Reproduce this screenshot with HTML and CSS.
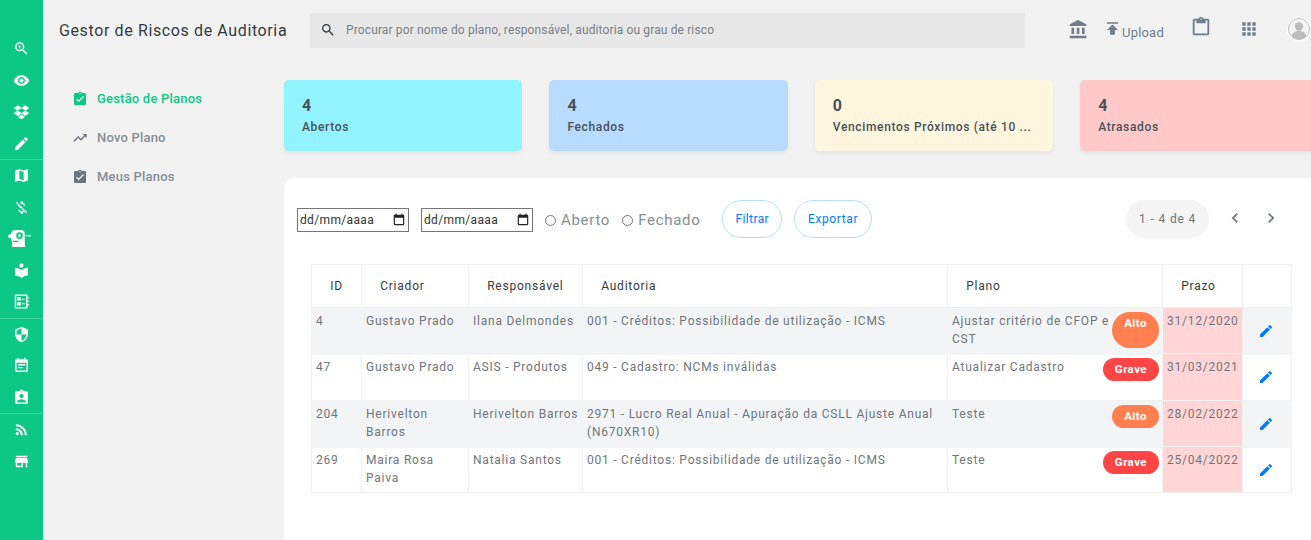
FILE: index.html
```html
<!DOCTYPE html>
<html lang="pt-br">
<head>
    <meta charset="UTF-8">
    <meta name="viewport" content="width=device-width, initial-scale=1.0">
    <title>Gestor de Riscos de Auditoria</title>
    <link rel="stylesheet" href="styles.css">
</head>
<body>

<svg class="sprite" width="0" height="0">
    <symbol id="i-zoom" viewBox="0 0 24 24"><path d="M15.5 14h-.79l-.28-.27C15.41 12.59 16 11.11 16 9.5 16 5.91 13.09 3 9.5 3S3 5.91 3 9.5 5.91 16 9.5 16c1.61 0 3.09-.59 4.23-1.57l.27.28v.79l5 4.99L20.49 19l-4.99-5zm-6 0C7.01 14 5 11.99 5 9.5S7.01 5 9.5 5 14 7.01 14 9.5 11.99 14 9.5 14z"/><path d="M12 10h-2v2H9v-2H7V9h2V7h1v2h2v1z"/></symbol>
    <symbol id="i-eye" viewBox="0 0 24 24"><path d="M12 4.5C7 4.5 2.73 7.61 1 12c1.73 4.39 6 7.5 11 7.5s9.27-3.11 11-7.5c-1.73-4.39-6-7.5-11-7.5zM12 17c-2.76 0-5-2.24-5-5s2.24-5 5-5 5 2.24 5 5-2.24 5-5 5zm0-8c-1.66 0-3 1.34-3 3s1.34 3 3 3 3-1.34 3-3-1.34-3-3-3z"/></symbol>
    <symbol id="i-dropbox" viewBox="0 0 24 24"><path d="M7 3L1 7l5 3.6L1 14.5l6 4 5-3.6 5 3.6 6-4-5-3.9L23 7l-6-4-5 3.8zM12 7.4l5.6 3.2L12 14l-5.6-3.4zM7 19.8l5-3.4 5 3.4-5 3.2z"/></symbol>
    <symbol id="i-edit" viewBox="0 0 24 24"><path d="M3 17.25V21h3.75L17.81 9.94l-3.75-3.75L3 17.25zM20.71 7.04c.39-.39.39-1.02 0-1.41l-2.34-2.34c-.39-.39-1.02-.39-1.41 0l-1.83 1.83 3.75 3.75 1.83-1.83z"/></symbol>
    <symbol id="i-map" viewBox="0 0 24 24"><path d="M20.5 3l-.16.03L15 5.1 9 3 3.36 4.9c-.21.07-.36.25-.36.48V20.5c0 .28.22.5.5.5l.16-.03L9 18.9l6 2.1 5.64-1.9c.21-.07.36-.25.36-.48V3.5c0-.28-.22-.5-.5-.5zM15 19l-6-2.11V5l6 2.11V19z"/></symbol>
    <symbol id="i-money" viewBox="0 0 24 24"><path d="M12.5 6.9c1.78 0 2.44.85 2.5 2.1h2.21c-.07-1.72-1.12-3.3-3.21-3.81V3h-3v2.16c-.53.12-1.03.3-1.48.54l1.47 1.47c.41-.17.91-.27 1.51-.27zM5.33 4.06L4.06 5.33 7.5 8.77c0 2.08 1.56 3.21 3.91 3.91l3.51 3.51c-.34.48-1.05.91-2.42.91-2.06 0-2.87-.92-2.98-2.1h-2.2c.12 2.19 1.76 3.42 3.68 3.83V21h3v-2.15c.96-.18 1.83-.55 2.46-1.12l2.22 2.22 1.27-1.27L5.33 4.06z"/></symbol>
    <symbol id="i-robot" viewBox="0 0 24 18"><path fill-rule="evenodd" d="M7 0h7c2 0 3.500 1.500 3.500 3.500V11l.5 7H4v-6.500C3.200 11 2.900 10 2.900 8.500H2a2 2 0 1 1 0-4h1C3.500 2 5 0 7 0zm5 2.500a3.500 3.500 0 1 0 0 7 3.500 3.500 0 0 0 0-7zm0 2a1.500 1.500 0 1 1 0 3 1.500 1.500 0 0 1 0-3zM5 11.500v1.300h6v-1.300z"/><path d="M17.500 5.700h4.500v.8h-4.500z"/><circle cx="22.700" cy="6.100" r="1.200"/></symbol>
    <symbol id="i-library" viewBox="0 0 24 24"><path d="M12 11.55C9.64 9.35 6.48 8 3 8v11c3.48 0 6.64 1.35 9 3.55 2.36-2.19 5.52-3.55 9-3.55V8c-3.48 0-6.64 1.35-9 3.55zM12 8c1.66 0 3-1.34 3-3s-1.34-3-3-3-3 1.34-3 3 1.34 3 3 3z"/></symbol>
    <symbol id="i-notebook" viewBox="0 0 24 24"><path fill-rule="evenodd" d="M4 2h15c1 0 1.500.7 1.500 1.500V6H23v1.500h-2.500V11H23v1.500h-2.500V16H23v1.500h-2.500v3c0 .8-.5 1.500-1.500 1.500H4c-1 0-1.500-.7-1.500-1.500v-17C2.500 2.700 3 2 4 2zm.5 2v16h14V4zM6 6h5v4.500H6zm6.500 2H17v1.500h-4.500zM6 13h5v4.500H6zm6.500 1.500H17V16h-4.500z"/></symbol>
    <symbol id="i-shield" viewBox="0 0 24 24"><path d="M12 1L3 5v6c0 5.550 3.840 10.740 9 12 5.160-1.260 9-6.450 9-12V5l-9-4zm0 10.990h7c-.53 4.120-3.280 7.790-7 8.940V12H5V6.300l7-3.110v8.800z"/></symbol>
    <symbol id="i-event" viewBox="0 0 24 24"><path d="M17 10H7v2h10v-2zm2-7h-1V1h-2v2H8V1H6v2H5c-1.110 0-1.990.9-1.990 2L3 19c0 1.100.89 2 2 2h14c1.100 0 2-.9 2-2V5c0-1.100-.9-2-2-2zm0 16H5V8h14v11zm-5-5H7v2h7v-2z"/></symbol>
    <symbol id="i-contact" viewBox="0 0 24 24"><path d="M19 3h-4.180C14.400 1.840 13.300 1 12 1c-1.300 0-2.400.84-2.820 2H5c-1.100 0-2 .9-2 2v14c0 1.100.9 2 2 2h14c1.100 0 2-.9 2-2V5c0-1.100-.9-2-2-2zm-7 0c.55 0 1 .45 1 1s-.45 1-1 1-1-.45-1-1 .45-1 1-1zm0 4c1.660 0 3 1.340 3 3s-1.340 3-3 3-3-1.340-3-3 1.340-3 3-3zm6 12H6v-1.400c0-2 4-3.100 6-3.100s6 1.100 6 3.100V19z"/></symbol>
    <symbol id="i-rss" viewBox="0 0 24 24"><circle cx="6.180" cy="17.820" r="2.180"/><path d="M4 4.440v2.830c7.030 0 12.730 5.700 12.730 12.730h2.830c0-8.590-6.970-15.560-15.560-15.560zm0 5.660v2.830c3.900 0 7.070 3.170 7.070 7.070h2.830c0-5.470-4.430-9.900-9.900-9.900z"/></symbol>
    <symbol id="i-store" viewBox="0 0 24 24"><path d="M20 4H4v2h16V4zm1 10v-2l-1-5H4l-1 5v2h1v6h10v-6h4v6h2v-6h1zm-9 4H6v-4h6v4z"/></symbol>
    <symbol id="i-done" viewBox="0 0 24 24"><path d="M19 3h-4.180C14.400 1.840 13.300 1 12 1c-1.300 0-2.400.84-2.820 2H5c-1.100 0-2 .9-2 2v14c0 1.100.9 2 2 2h14c1.100 0 2-.9 2-2V5c0-1.100-.9-2-2-2zm-7 0c.55 0 1 .45 1 1s-.45 1-1 1-1-.45-1-1 .45-1 1-1zm-2 14l-4-4 1.410-1.410L10 14.170l6.590-6.590L18 9l-8 8z"/></symbol>
    <symbol id="i-trend" viewBox="0 0 24 24"><path d="M16 6l2.290 2.290-4.880 4.880-4-4L2 16.590 3.410 18l6-6 4 4 6.300-6.290L22 12V6z"/></symbol>
    <symbol id="i-bank" viewBox="0 0 24 24"><path d="M4 10v7h3v-7H4zm6 0v7h3v-7h-3zM2 22h19v-3H2v3zm14-12v7h3v-7h-3zm-4.500-9L2 6v2h19V6l-9.500-5z"/></symbol>
    <symbol id="i-publish" viewBox="0 0 24 24"><path d="M5 4v2h14V4H5zm0 10h4v6h6v-6h4l-7-7-7 7z"/></symbol>
    <symbol id="i-clip" viewBox="0 0 24 24"><path d="M19 3h-4.180C14.400 1.840 13.300 1 12 1c-1.300 0-2.400.84-2.820 2H5c-1.100 0-2 .9-2 2v14c0 1.100.9 2 2 2h14c1.100 0 2-.9 2-2V5c0-1.100-.9-2-2-2zm-7-.25c.41 0 .75.34.75.75s-.34.75-.75.75-.75-.34-.75-.75.34-.75.75-.75zM19 19H5V5h2v3h10V5h2v14z"/></symbol>
    <symbol id="i-apps" viewBox="0 0 24 24"><path d="M4 8h4V4H4v4zm6 12h4v-4h-4v4zm-6 0h4v-4H4v4zm0-6h4v-4H4v4zm6 0h4v-4h-4v4zm6-10v4h4V4h-4zm-6 4h4V4h-4v4zm6 6h4v-4h-4v4zm0 6h4v-4h-4v4z"/></symbol>
    <symbol id="i-search" viewBox="0 0 24 24"><path d="M15.500 14h-.79l-.28-.27C15.410 12.590 16 11.110 16 9.500 16 5.910 13.090 3 9.500 3S3 5.910 3 9.500 5.910 16 9.500 16c1.610 0 3.090-.59 4.230-1.570l.27.28v.79l5 4.990L20.490 19l-4.990-5zm-6 0C7.010 14 5 11.990 5 9.500S7.010 5 9.500 5 14 7.010 14 9.500 11.990 14 9.500 14z"/></symbol>
    <symbol id="i-cal" viewBox="0 0 24 24"><path d="M19 3h-1V1h-2v2H8V1H6v2H5c-1.100 0-2 .9-2 2v14c0 1.100.9 2 2 2h14c1.100 0 2-.9 2-2V5c0-1.100-.9-2-2-2zm0 16H5V8h14v11z"/></symbol>
    <symbol id="i-left" viewBox="0 0 24 24"><path d="M15.410 7.410L14 6l-6 6 6 6 1.410-1.410L10.830 12z"/></symbol>
    <symbol id="i-right" viewBox="0 0 24 24"><path d="M10 6L8.590 7.410 13.170 12l-4.580 4.590L10 18l6-6z"/></symbol>
</svg>

<div class="app">
    <!-- Barra lateral -->
    <aside class="rail">
        <div class="rail-group">
            <span class="rail-item"><svg><use href="#i-zoom"/></svg></span>
            <span class="rail-item"><svg><use href="#i-eye"/></svg></span>
            <span class="rail-item"><svg><use href="#i-dropbox"/></svg></span>
            <span class="rail-item"><svg><use href="#i-edit"/></svg></span>
        </div>
        <div class="rail-group">
            <span class="rail-item"><svg><use href="#i-map"/></svg></span>
            <span class="rail-item"><svg><use href="#i-money"/></svg></span>
            <span class="rail-item"><svg class="robot"><use href="#i-robot"/></svg></span>
            <span class="rail-item"><svg><use href="#i-library"/></svg></span>
            <span class="rail-item"><svg><use href="#i-notebook"/></svg></span>
        </div>
        <div class="rail-group">
            <span class="rail-item"><svg><use href="#i-shield"/></svg></span>
            <span class="rail-item"><svg><use href="#i-event"/></svg></span>
            <span class="rail-item"><svg><use href="#i-contact"/></svg></span>
        </div>
        <div class="rail-group">
            <span class="rail-item"><svg><use href="#i-rss"/></svg></span>
            <span class="rail-item"><svg><use href="#i-store"/></svg></span>
        </div>
    </aside>

    <div class="main">
        <header class="topbar">
            <div class="app-title">Gestor de Riscos de Auditoria</div>
            <div class="search">
                <svg><use href="#i-search"/></svg>
                <span>Procurar por nome do plano, responsável, auditoria ou grau de risco</span>
            </div>
            <div class="top-actions">
                <svg class="top-bank"><use href="#i-bank"/></svg>
                <span class="upload"><svg><use href="#i-publish"/></svg>Upload</span>
                <svg class="top-clip"><use href="#i-clip"/></svg>
                <svg class="top-apps"><use href="#i-apps"/></svg>
                <span class="avatar">
                    <svg viewBox="0 0 24 24"><circle cx="12" cy="12" r="11.500" fill="#f4f4f4" stroke="#bdbdbd"/><circle cx="12" cy="9" r="4.500" fill="#bdbdbd"/><path d="M4 20c1-4.500 4.500-6 8-6s7 1.500 8 6a11 11 0 0 1-16 0z" fill="#bdbdbd"/></svg>
                </span>
            </div>
        </header>

        <div class="content">
            <nav class="side-menu">
                <a class="menu-item active"><svg><use href="#i-done"/></svg>Gestão de Planos</a>
                <a class="menu-item"><svg><use href="#i-trend"/></svg>Novo Plano</a>
                <a class="menu-item"><svg><use href="#i-done"/></svg>Meus Planos</a>
            </nav>

            <section class="board">
                <div class="cards">
                    <div class="card card-open"><strong>4</strong><span>Abertos</span></div>
                    <div class="card card-closed"><strong>4</strong><span>Fechados</span></div>
                    <div class="card card-soon"><strong>0</strong><span>Vencimentos Próximos (até 10 ...</span></div>
                    <div class="card card-late"><strong>4</strong><span>Atrasados</span></div>
                </div>

                <div class="panel">
                    <div class="filters">
                        <div class="date-box">dd/mm/aaaa<svg><use href="#i-cal"/></svg></div>
                        <div class="date-box">dd/mm/aaaa<svg><use href="#i-cal"/></svg></div>
                        <label class="radio"><i></i>Aberto</label>
                        <label class="radio"><i></i>Fechado</label>
                        <button class="btn-filter">Filtrar</button>
                        <button class="btn-export">Exportar</button>
                        <div class="pager">
                            <span class="pager-count">1 - 4 de 4</span>
                            <svg><use href="#i-left"/></svg>
                            <svg><use href="#i-right"/></svg>
                        </div>
                    </div>

                    <table class="plans">
                        <colgroup>
                            <col class="c-id"><col class="c-creator"><col class="c-owner"><col class="c-audit"><col class="c-plan"><col class="c-date"><col class="c-edit">
                        </colgroup>
                        <thead>
                            <tr>
                                <th>ID</th>
                                <th>Criador</th>
                                <th>Responsável</th>
                                <th>Auditoria</th>
                                <th>Plano</th>
                                <th>Prazo</th>
                                <th></th>
                            </tr>
                        </thead>
                        <tbody>
                            <tr>
                                <td>4</td>
                                <td>Gustavo Prado</td>
                                <td>Ilana Delmondes</td>
                                <td>001 - Créditos: Possibilidade de utilização - ICMS</td>
                                <td><span class="badge alto tall">Alto</span>Ajustar critério de CFOP e CST</td>
                                <td class="late">31/12/2020</td>
                                <td class="edit"><svg><use href="#i-edit"/></svg></td>
                            </tr>
                            <tr>
                                <td>47</td>
                                <td>Gustavo Prado</td>
                                <td>ASIS - Produtos</td>
                                <td>049 - Cadastro: NCMs inválidas</td>
                                <td><span class="badge grave">Grave</span>Atualizar Cadastro</td>
                                <td class="late">31/03/2021</td>
                                <td class="edit"><svg><use href="#i-edit"/></svg></td>
                            </tr>
                            <tr>
                                <td>204</td>
                                <td>Herivelton Barros</td>
                                <td>Herivelton Barros</td>
                                <td>2971 - Lucro Real Anual - Apuração da CSLL Ajuste Anual (N670XR10)</td>
                                <td><span class="badge alto">Alto</span>Teste</td>
                                <td class="late">28/02/2022</td>
                                <td class="edit"><svg><use href="#i-edit"/></svg></td>
                            </tr>
                            <tr>
                                <td>269</td>
                                <td>Maira Rosa Paiva</td>
                                <td>Natalia Santos</td>
                                <td>001 - Créditos: Possibilidade de utilização - ICMS</td>
                                <td><span class="badge grave">Grave</span>Teste</td>
                                <td class="late">25/04/2022</td>
                                <td class="edit"><svg><use href="#i-edit"/></svg></td>
                            </tr>
                        </tbody>
                    </table>
                </div>
            </section>
        </div>
    </div>
</div>

</body>
</html>
```

FILE: styles.css
```css
html, body {
    margin: 0;
    padding: 0;
    height: 540px;
    overflow: hidden;
}
body {
    font-family: Roboto, "Liberation Sans", sans-serif;
    background-color: #f2f2f2;
    color: #6c757d;
}
.sprite {
    position: absolute;
}
svg {
    fill: currentColor;
}
.app {
    display: flex;
    height: 540px;
}

/* Barra lateral */
.rail {
    width: 43px;
    flex: none;
    background-color: #0cc785;
    color: #fff;
    padding-top: 33px;
    box-sizing: border-box;
}
.rail-group {
    border-bottom: 1px solid #3fd49f;
}
.rail-group:last-child {
    border-bottom: none;
}
.rail-item {
    display: flex;
    align-items: center;
    justify-content: center;
    height: 31.5px;
}
.rail-item svg {
    width: 17px;
    height: 17px;
}
.rail-item svg.robot {
    width: 23px;
    height: 17px;
    margin-left: -4px;
    flex: none;
}

/* Topo */
.main {
    flex: 1;
    min-width: 0;
}
.topbar {
    display: flex;
    align-items: center;
    height: 60px;
    padding-left: 16px;
}
.app-title {
    width: 251px;
    flex: none;
    font-size: 16px;
    letter-spacing: 0.62px;
    color: #343a40;
}
.search {
    display: flex;
    align-items: center;
    width: 715px;
    height: 35px;
    flex: none;
    background-color: #e8e8e8;
    font-size: 12px;
    letter-spacing: 0.13px;
    color: #7b8086;
}
.search svg {
    width: 16px;
    height: 16px;
    margin: 0 10px 0 10px;
    color: #343a40;
}
.top-actions {
    display: flex;
    align-items: center;
    margin: -2px 0 0 43px;
    color: #6f7d8c;
}
.top-bank {
    width: 21px;
    height: 21px;
}
.upload {
    display: flex;
    align-items: flex-end;
    margin-left: 14px;
    font-size: 13px;
    letter-spacing: 0.2px;
}
.upload svg {
    width: 19px;
    height: 19px;
    margin: 0 0 2px 0;
}
.top-clip {
    width: 22px;
    height: 22px;
    margin: -4px 0 0 26px;
}
.top-apps {
    width: 20px;
    height: 20px;
    margin-left: 27px;
}
.avatar {
    display: block;
    width: 25px;
    height: 25px;
    box-sizing: border-box;
    padding: 1.5px;
    margin-left: 28px;
    background: #fff;
    border-radius: 50%;
    flex: none;
}
.avatar svg {
    display: block;
    width: 22px;
    height: 22px;
}

/* Menu */
.content {
    display: flex;
}
.side-menu {
    width: 241px;
    flex: none;
    padding-top: 19px;
    box-sizing: border-box;
}
.menu-item {
    display: flex;
    align-items: center;
    height: 39px;
    padding-left: 29px;
    font-size: 13px;
    font-weight: 500;
    letter-spacing: 0.2px;
    color: #868e96;
}
.menu-item svg {
    width: 16px;
    height: 16px;
    margin-right: 9px;
    color: #6c757d;
}
.menu-item.active,
.menu-item.active svg {
    color: #0cc785;
}

/* Cards */
.board {
    flex: none;
    width: 1100px;
    padding-top: 20px;
}
.cards {
    display: flex;
    gap: 27px;
}
.card {
    display: flex;
    flex-direction: column;
    width: 238.4px;
    height: 71px;
    flex: none;
    box-sizing: border-box;
    padding: 16px 18px 0;
    border-radius: 5px;
    box-shadow: 0 2px 4px rgba(0, 0, 0, 0.06);
    color: #495057;
}
.card strong {
    font-size: 16px;
    font-weight: 700;
    line-height: 19px;
}
.card span {
    margin-top: 4px;
    font-size: 12px;
    font-weight: 500;
    letter-spacing: 0.65px;
    line-height: 16px;
    white-space: nowrap;
}
.card-open { background-color: #92f4ff; }
.card-closed { background-color: #b8dcff; }
.card-soon { background-color: #fff6df; }
.card-late { background-color: #ffc9c9; }

/* Painel */
.panel {
    margin-top: 27px;
    height: 362px;
    box-sizing: border-box;
    background-color: #fff;
    border-radius: 10px 0 0 0;
    padding: 22px 0 0 13px;
}
.filters {
    display: flex;
    align-items: center;
    height: 38px;
}
.date-box {
    display: flex;
    align-items: center;
    justify-content: space-between;
    width: 112px;
    height: 24px;
    box-sizing: border-box;
    margin: 2px 12px 0 0;
    padding: 0 2px;
    border: 1px solid #767676;
    font-size: 12px;
    letter-spacing: 0.35px;
    color: #333;
}
.date-box svg {
    width: 14px;
    height: 14px;
    color: #222;
}
.radio {
    display: flex;
    align-items: center;
    margin-right: 12px;
    padding-top: 2px;
    font-size: 15px;
    letter-spacing: 0.7px;
    color: #868e96;
}
.radio i {
    width: 9px;
    height: 9px;
    margin-right: 5px;
    border: 1px solid #767676;
    border-radius: 50%;
}
button {
    height: 38px;
    background-color: #fff;
    border: 1px solid #b8dcff;
    border-radius: 19px;
    color: #007bff;
    font-family: inherit;
    font-size: 12px;
}
.btn-filter {
    margin-left: 10px;
    padding: 0 12px;
    letter-spacing: 0.4px;
}
.btn-export {
    margin-left: 12px;
    padding: 0 13px;
    letter-spacing: 0.6px;
}
.pager {
    display: flex;
    align-items: center;
    margin-left: 254px;
    color: #6c757d;
}
.pager-count {
    display: flex;
    align-items: center;
    height: 38px;
    padding: 0 13px;
    background-color: #f5f5f5;
    border-radius: 19px;
    font-size: 12px;
    letter-spacing: 0.85px;
}
.pager svg {
    width: 20px;
    height: 20px;
    margin: -3px 0 0 16px;
}

/* Tabela */
.plans {
    width: 980px;
    margin: 26px 0 0 14px;
    table-layout: fixed;
    border-collapse: collapse;
    font-size: 12px;
    letter-spacing: 0.77px;
    line-height: 18px;
}
.c-id { width: 50px; }
.c-creator { width: 107px; }
.c-owner { width: 114px; }
.c-audit { width: 365px; }
.c-plan { width: 215px; }
.c-date { width: 80px; }
.c-edit { width: 49px; }
.plans th {
    height: 42px;
    padding: 0 18.2px;
    border: 1px solid #f0f0f0;
    text-align: left;
    font-weight: 400;
    color: #343a40;
    white-space: nowrap;
}
.plans td {
    height: 46.4px;
    padding: 4px 2px 0 4px;
    box-sizing: border-box;
    vertical-align: top;
    border-left: 1px solid #f0f0f0;
    border-right: 1px solid #f0f0f0;
    border-bottom: 1px solid #f0f0f0;
    color: #6f757b;
}
.plans tbody tr:last-child td {
    height: 45.5px;
}
.plans tbody tr:nth-child(odd) td {
    background-color: #f2f4f6;
    border-left-color: #f2f4f6;
    border-right-color: #f2f4f6;
    border-bottom-color: #f2f4f6;
    box-shadow: 0 1px 0 #f2f4f6;
}
.plans tbody tr td.late,
.plans tbody tr:nth-child(odd) td.late {
    background-color: #ffd5d5;
    border: 1px solid #f0f0f0;
    box-shadow: none;
    white-space: nowrap;
}
.plans td.edit {
    text-align: center;
    padding: 15px 4px 0 2px;
    color: #007bff;
}
.edit svg {
    width: 16px;
    height: 16px;
}
.badge {
    float: right;
    margin: 0 1px 0 0;
    padding: 0 12px;
    height: 23px;
    line-height: 23px;
    border-radius: 12px;
    font-size: 11.5px;
    font-weight: 700;
    letter-spacing: 0.45px;
    color: #fff;
}
.badge.tall {
    height: 36px;
    line-height: 23px;
    border-radius: 18px;
}
.alto { background-color: #ff7f50; }
.grave { background-color: #ff4545; }
```
